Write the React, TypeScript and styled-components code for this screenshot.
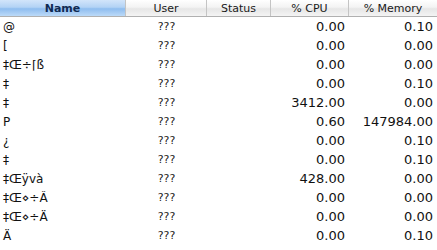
import React from "react";
import styled, { createGlobalStyle } from "styled-components";

const Global = createGlobalStyle`
  html, body { margin: 0; padding: 0; background: #fff; }
  body { font-family: "DejaVu Sans", "Liberation Sans", sans-serif; }
`;

const COLS = "126px 81px 64px 78px 88px";

const Table = styled.div`
  width: 437px;
  height: 250px;
  overflow: hidden;
  background: #fff;
`;

const HeaderRow = styled.div`
  display: grid;
  grid-template-columns: ${COLS};
  height: 17px;
  border-bottom: 1px solid #b0b0b0;
  box-sizing: border-box;
`;

const HeaderCell = styled.div<{ $active?: boolean; $last?: boolean }>`
  display: flex;
  align-items: center;
  justify-content: center;
  font-size: 11px;
  font-weight: ${(p) => (p.$active ? "bold" : "normal")};
  color: ${(p) => (p.$active ? "#102a52" : "#1a1a1a")};
  border-right: ${(p) => (p.$last ? "none" : "1px solid #c4c4c4")};
  background: ${(p) =>
    p.$active
      ? "linear-gradient(to bottom, #d2e5fa 0%, #b3d3f5 45%, #8fbdef 55%, #bcdaf8 100%)"
      : "linear-gradient(to bottom, #ffffff 0%, #f3f3f3 45%, #e6e6e6 55%, #f4f4f4 100%)"};
`;

const Row = styled.div`
  display: grid;
  grid-template-columns: ${COLS};
  height: 19px;
  align-items: center;
  font-size: 13px;
  color: #111;
`;

const Cell = styled.div<{ $align: "left" | "center" | "right" }>`
  text-align: ${(p) => p.$align};
  padding: ${(p) => (p.$align === "left" ? "0 0 0 3px" : p.$align === "right" ? "0 4px 0 0" : "0")};
  white-space: nowrap;
  overflow: hidden;
`;

const NameCell = styled(Cell)`
  font-size: 12px;
`;

const UserCell = styled(Cell)`
  font-size: 11px;
  color: #222;
`;

const rows = [
  ["@", "0.00", "0.10"],
  ["[", "0.00", "0.00"],
  ["‡Œ÷⌈ß", "0.00", "0.00"],
  ["‡", "0.00", "0.10"],
  ["‡", "3412.00", "0.00"],
  ["P", "0.60", "147984.00"],
  ["¿", "0.00", "0.10"],
  ["‡", "0.00", "0.10"],
  ["‡Œÿvà", "428.00", "0.00"],
  ["‡Œ⋄÷Â", "0.00", "0.00"],
  ["‡Œ⋄÷Ä", "0.00", "0.00"],
  ["Ä", "0.00", "0.10"],
];

export default function App() {
  return (
    <>
      <Global />
      <Table>
        <HeaderRow>
          <HeaderCell $active>Name</HeaderCell>
          <HeaderCell>User</HeaderCell>
          <HeaderCell>Status</HeaderCell>
          <HeaderCell>% CPU</HeaderCell>
          <HeaderCell $last>% Memory</HeaderCell>
        </HeaderRow>
        {rows.map((r, i) => (
          <Row key={i}>
            <NameCell $align="left">{r[0]}</NameCell>
            <UserCell $align="center">???</UserCell>
            <Cell $align="center"></Cell>
            <Cell $align="right">{r[1]}</Cell>
            <Cell $align="right">{r[2]}</Cell>
          </Row>
        ))}
      </Table>
    </>
  );
}
